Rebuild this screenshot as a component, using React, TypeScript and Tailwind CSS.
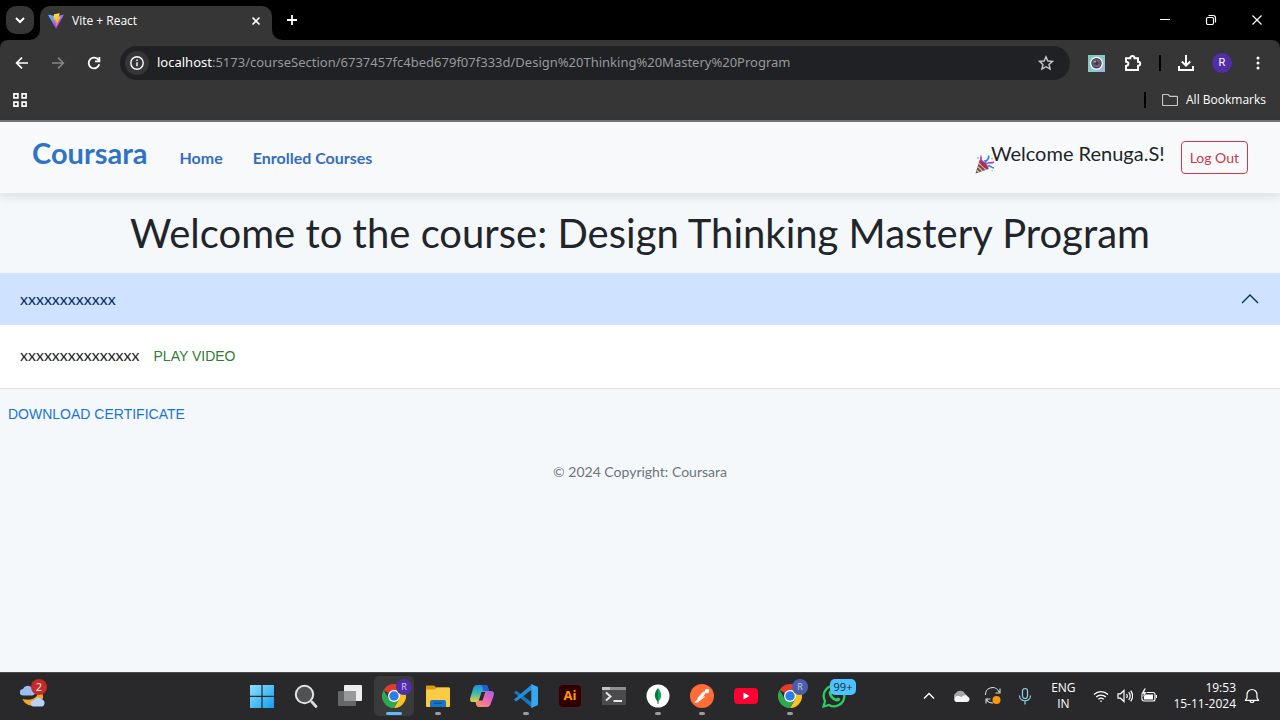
import type { ReactNode } from "react";

const UI = "font-['Open_Sans','Noto_Sans',sans-serif]";

function ViteLogo() {
  return (
    <svg viewBox="0 0 410 404" className="size-4" aria-hidden="true">
      <defs>
        <linearGradient id="va" x1="6" y1="33" x2="235" y2="344" gradientUnits="userSpaceOnUse">
          <stop stopColor="#41D1FF" />
          <stop offset="1" stopColor="#BD34FE" />
        </linearGradient>
        <linearGradient id="vb" x1="194" y1="9" x2="236" y2="293" gradientUnits="userSpaceOnUse">
          <stop stopColor="#FFEA83" />
          <stop offset=".08" stopColor="#FFDD35" />
          <stop offset="1" stopColor="#FFA800" />
        </linearGradient>
      </defs>
      <path fill="url(#va)" d="M399.6 59.5 215.6 388.5c-3.8 6.8-13.5 6.8-17.4.1L10.6 59.5c-4.2-7.4 2.1-16.3 10.4-14.8l184.2 32.9c1.2.2 2.4.2 3.5 0l180.3-32.8c8.3-1.5 14.7 7.4 10.6 14.7Z" />
      <path fill="url(#vb)" d="M293 1.6 156.8 28.3a5 5 0 0 0-4 4.6l-8.4 141.4a5 5 0 0 0 6.1 5.2l37.9-8.8c3.6-.8 6.7 2.3 6 5.9l-11.3 55.2c-.8 3.7 2.7 6.9 6.3 5.8l23.4-7.1c3.6-1.1 7.2 2.1 6.3 5.8l-17.9 86.6c-1.1 5.4 6.1 8.4 9.1 3.7l2-3.1L323.4 102.2c1.9-3.7-1.3-7.9-5.4-7.1l-39 7.5c-3.7.7-6.8-2.7-5.8-6.3l25.5-88.4c1-3.6-2.1-7.1-5.7-6.3Z" />
    </svg>
  );
}

function Line({ d, size = "size-4", w = 1.6, vb = "0 0 16 16", cls = "" }: { d: string; size?: string; w?: number; vb?: string; cls?: string }) {
  return (
    <svg viewBox={vb} className={`${size} ${cls}`} fill="none" stroke="currentColor" strokeWidth={w} aria-hidden="true">
      <path d={d} />
    </svg>
  );
}

function TitleBar() {
  return (
    <div className="flex h-10 bg-black text-white">
      <div className="w-10 shrink-0 pl-[6px] pt-[6px]">
        <button aria-label="Search tabs" className="grid size-7 place-items-center rounded-[10px] bg-[#363636]">
          <Line d="M4 6l4 4 4-4" size="size-4" w={2} />
        </button>
      </div>
      <div className="relative mt-[6px] flex w-[232px] items-center rounded-t-[10px] bg-[#363636] pb-1 pl-2 pr-2">
        <svg viewBox="0 0 10 10" className="absolute -left-[10px] bottom-0 size-[10px] fill-[#363636]"><path d="M10 0v10H0A10 10 0 0 0 10 0" /></svg>
        <svg viewBox="0 0 10 10" className="absolute -right-[10px] bottom-0 size-[10px] fill-[#363636]"><path d="M0 0v10h10A10 10 0 0 1 0 0" /></svg>
        <ViteLogo />
        <span className={`${UI} ml-2 flex-1 text-[12px]`}>Vite + React</span>
        <button aria-label="Close tab" className="grid size-4 place-items-center"><Line d="M4.5 4.5l7 7M11.5 4.5l-7 7" /></button>
      </div>
      <button aria-label="New tab" className="ml-3 grid w-4 place-items-center"><Line d="M8 3v10M3 8h10" w={1.8} /></button>
      <div className="ml-auto flex">
        <button aria-label="Minimize" className="grid w-[46px] place-items-center"><Line d="M3 7.5h10" w={1} /></button>
        <button aria-label="Restore" className="grid w-[46px] place-items-center">
          <Line d="M5 5.5h4a1.5 1.5 0 0 1 1.5 1.5v4a1.5 1.5 0 0 1-1.5 1.5H5A1.5 1.5 0 0 1 3.5 11V7A1.5 1.5 0 0 1 5 5.5M5.5 3.5H10A2.5 2.5 0 0 1 12.5 6v4.5" w={1.2} />
        </button>
        <button aria-label="Close" className="grid w-[46px] place-items-center"><Line d="M3.5 3.5l9 9M12.5 3.5l-9 9" w={1.2} /></button>
      </div>
    </div>
  );
}

function CameraIcon() {
  return (
    <svg viewBox="0 0 17 17" className="size-[17px]" aria-hidden="true">
      <defs>
        <linearGradient id="cam" x1="0" y1="0" x2="1" y2="1"><stop stopColor="#7fc9b4" /><stop offset=".6" stopColor="#8ccac9" /><stop offset="1" stopColor="#a6a8ee" /></linearGradient>
      </defs>
      <path fill="url(#cam)" d="M0 0h17v17H0z" />
      <circle cx="8.5" cy="8.3" r="6.5" fill="#fff" />
      <circle cx="8.5" cy="8.3" r="4.6" fill="#6a6078" stroke="#453b55" strokeWidth="1.2" />
      <circle cx="8.5" cy="8.3" r="2" fill="#403750" />
      <circle cx="7" cy="6.8" r=".8" fill="#d5cfe2" />
    </svg>
  );
}

function Toolbar() {
  return (
    <div className="bg-black">
      <div className="rounded-t-[8px] border-b-2 border-[#77777a] bg-[#363636] text-white">
        <div className="flex h-[46px] items-center pl-[14px] pr-[14px]">
          <button aria-label="Back"><Line d="M14 8H3M8 2.6L2.6 8 8 13.4" w={1.7} /></button>
          <button aria-label="Forward" className="ml-5 text-[#878787]"><Line d="M2 8h11M8 2.6L13.4 8 8 13.4" w={1.5} /></button>
          <button aria-label="Reload" className="ml-5"><Line d="M13.3 9.3A5.4 5.4 0 1 1 12.6 5M13.4 2v4.3H9" w={1.8} /></button>
          <div className="ml-[18px] flex h-[34px] flex-1 items-center rounded-full bg-[#202124] pl-[5px] pr-4">
            <button aria-label="Site information" className="grid size-6 place-items-center rounded-full bg-[#363636]">
              <Line d="M8 1.8a6.2 6.2 0 1 0 0 12.4A6.2 6.2 0 1 0 8 1.8M8 7.2v4M8 4.5v1.5" w={1.4} />
            </button>
            <p className="ml-2 flex-1 whitespace-nowrap font-['Noto_Sans','Open_Sans',sans-serif] text-[13px] text-[#97999c]">
              <span className="text-white">localhost</span>:5173/courseSection/6737457fc4bed679f07f333d/Design%20Thinking%20Mastery%20Program
            </p>
            <button aria-label="Bookmark this tab" className="text-[#c9c9c9]">
              <Line d="M8 1.7l1.9 4.3 4.7.4-3.6 3.1 1.1 4.6L8 11.7l-4.1 2.4L5 9.5 1.4 6.4 6.1 6z" w={1.4} />
            </button>
          </div>
          <div className="ml-[18px] flex items-center">
            <CameraIcon />
            <button aria-label="Extensions" className="ml-[19px]">
              <Line vb="0 0 18 18" size="size-[18px]" w={1.9} d="M2 4.2h4.300c0-3 4.200-3 4.200 0H14v3.600c3 0 3 3.800 0 3.800v4.400H2v-4.100c3.200-.4 3.200-4 0-4.200z" />
            </button>
            <span className="ml-[17px] h-4 w-[2px] bg-black" />
            <button aria-label="Downloads" className="ml-4">
              <Line vb="0 0 18 18" size="size-[18px]" w={2} d="M9 1v10.5M4.8 7.5L9 11.6l4.2-4.1M2 12v4h14v-4" />
            </button>
            <button aria-label="Profile" className="ml-[17px] grid size-5 place-items-center rounded-full bg-[#512da8] font-['Roboto',sans-serif] text-[11px]">R</button>
            <button aria-label="Menu" className="ml-[18px]">
              <svg viewBox="0 0 16 16" className="size-4 fill-white"><circle cx="8" cy="3" r="1.5" /><circle cx="8" cy="8" r="1.5" /><circle cx="8" cy="13" r="1.5" /></svg>
            </button>
          </div>
        </div>
        <div className="flex h-[34px] items-center pb-2 pl-3 pr-[14px] pt-[2px]">
          <button aria-label="Apps"><Line d="M1.9 1.9h4v4h-4zM10.1 1.9h4v4h-4zM1.9 10.1h4v4h-4zM10.1 10.1h4v4h-4z" w={1.6} /></button>
          <span className="ml-auto h-4 w-[2px] bg-black" />
          <button className={`${UI} ml-4 flex items-center gap-2 text-[12px] leading-4`}>
            <Line d="M1.5 2.5h4.7l1.7 1.8h6.600a1 1 0 0 1 1 1v7.200a1 1 0 0 1-1 1h-13a1 1 0 0 1-1-1v-9a1 1 0 0 1 1-1z" w={1.2} cls="text-[#c7c7c7]" />
            All Bookmarks
          </button>
        </div>
      </div>
    </div>
  );
}

function PartyPopper() {
  return (
    <svg viewBox="0 0 20 20" className="size-5" aria-hidden="true" fill="none">
      <path d="M4.500 6.500l9 8.500L.5 19.500z" fill="#6b4d4a" />
      <path d="M3.800 9l7.500 7M2.500 12.500l5 4.500M1.500 16l3 2.500" stroke="#dfbfa8" strokeWidth="1.300" />
      <path d="M4.500 6c3-.5 8.500 4.500 9.200 9C10 15.500 4 10 4.500 6z" fill="#bf2456" />
      <path d="M8 8C5.500 6.500 5.500 4 6.500 2.500" stroke="#c32daa" strokeWidth="1.600" />
      <path d="M10 9c1-4 5-3 3.500-7.500M10 6c0 2 1 3 1 4" stroke="#1993dc" strokeWidth="1.700" />
      <path d="M12 10c2-3 3 .5 7-2" stroke="#d033bd" strokeWidth="1.600" />
      <path d="M12.500 13c2-3 3 .5 6.500 1" stroke="#1993dc" strokeWidth="1.600" />
      <g fill="#f0b32e"><circle cx="6" cy="1.500" r=".8" /><circle cx="17" cy="4.500" r="1" /><circle cx="17" cy="16.500" r=".7" /></g>
      <circle cx="3" cy="4" r=".7" fill="#1993dc" />
    </svg>
  );
}

function SiteNav() {
  return (
    <nav className="flex h-[71px] items-center bg-[#f8f9fa] px-8 shadow-[0_4px_10px_rgba(0,0,0,0.1)]">
      <a href="#" className="pb-[10px] text-[29px] leading-8 font-bold text-[#2f73c4]">Coursara</a>
      <a href="#" className="ml-8 text-[16px] font-bold text-[#356dbd]">Home</a>
      <a href="#" className="ml-[30px] text-[16px] font-bold text-[#356dbd]">Enrolled Courses</a>
      <div className="ml-auto flex items-center">
        <div className="-mr-1 pt-3"><PartyPopper /></div>
        <span className="pb-[10px] text-[20px] leading-6 text-[#212529]">Welcome Renuga.S!</span>
        <button className="ml-4 h-[33px] rounded-[4px] border border-[#dc3545] px-2 text-[14px] text-[#c83a4a]">Log Out</button>
      </div>
    </nav>
  );
}

function ChromeLogo() {
  return (
    <svg viewBox="0 0 48 48" className="size-6" aria-hidden="true">
      <path fill="#e33b2e" d="M24 24L3.2 12a24 24 0 0 1 41.6 0z" />
      <path fill="#fcc31e" d="M24 24V12h20.8A24 24 0 0 1 24 48L34.4 30z" />
      <path fill="#2da94f" d="M3.2 12L13.6 30 24 24l10.4 6L24 48A24 24 0 0 1 3.2 12z" />
      <circle cx="24" cy="24" r="12" fill="#fff" />
      <circle cx="24" cy="24" r="9.5" fill="#2b7de9" />
    </svg>
  );
}

function Task({ label, active, open, badge, children }: { label: string; active?: boolean; open?: boolean; badge?: ReactNode; children: ReactNode }) {
  return (
    <button aria-label={label} className="flex w-11 justify-center">
      <span className={`relative grid h-10 w-10 place-items-center rounded-[5px] ${active ? "bg-[#3a3a3b]" : ""}`}>
        {children}
        {badge}
        {active && <span className="absolute bottom-[1px] h-[3px] w-4 rounded-full bg-[#5bbcf3]" />}
        {open && <span className="absolute bottom-[1px] h-[3px] w-[6px] rounded-full bg-[#9b9b9d]" />}
      </span>
    </button>
  );
}

function Taskbar() {
  return (
    <footer className={`${UI} flex h-12 items-center bg-[#29292b] text-white shadow-[inset_0_1px_0_#48484b]`}>
      <div className="w-60 shrink-0 pl-5">
        <button aria-label="Weather, 2 alerts" className="relative block size-7">
          <svg viewBox="0 0 28 28" className="size-7" aria-hidden="true">
            <path fill="#f7a427" d="M17 6c4 7-3 14-14.500 11C6 26 20 26 23 16c.5-4-2-8-6-10z" />
            <path fill="#9bbdf0" d="M3 13.500a3 3 0 0 1 0-6.500 5 5 0 0 1 8-2 4 4 0 0 1 1 8.500z" />
            <path fill="#b6d2fb" d="M13.500 24.500a3 3 0 0 1 .5-6 4.200 4.200 0 0 1 7.500-1 3.600 3.600 0 0 1 .5 7z" />
          </svg>
          <span className="absolute -top-[3px] left-[11px] grid size-4 place-items-center rounded-full bg-[#c62a24] text-[11px]">2</span>
        </button>
      </div>
      <div className="flex">
        <Task label="Start">
          <svg viewBox="0 0 24 24" className="size-6"><defs><linearGradient id="win" x1="0" y1="0" x2="1" y2="1"><stop stopColor="#8be2fb" /><stop offset="1" stopColor="#149df0" /></linearGradient></defs><path fill="url(#win)" d="M0 1h11.4v10.800H0zM12.600 1H24v10.800H12.600zM0 13h11.400v11H0zM12.600 13H24v11H12.600z" /></svg>
        </Task>
        <Task label="Search">
          <svg viewBox="0 0 24 24" className="size-6" fill="none"><path d="M18 18l4 4.500" stroke="#d9dadc" strokeWidth="2.800" strokeLinecap="round" /><circle cx="10.500" cy="10.500" r="8.700" fill="#515254" stroke="#e1e3e5" strokeWidth="2" /></svg>
        </Task>
        <Task label="Task view">
          <svg viewBox="0 0 24 24" className="size-6"><rect x="6" y="1" width="18" height="16" rx="1" fill="#ededee" /><rect y="7" width="18" height="15" rx="1" fill="#656668" /><path fill="#98999b" d="M6 7h12v10H6z" /></svg>
        </Task>
        <Task label="Chrome" active badge={<span className="absolute right-[2px] top-[3px] grid size-4 place-items-center rounded-full bg-[#512da8] text-[9px] text-[#d7cef0]">R</span>}><ChromeLogo /></Task>
        <Task label="File Explorer" open>
          <svg viewBox="0 0 24 24" className="size-6"><path fill="#d79a16" d="M0 2.500a1 1 0 0 1 1-1h7l2.500 2H23v6H0z" /><path fill="#fccb45" d="M0 5.500h8.500l2.500-2h12a1 1 0 0 1 1 1V22a1 1 0 0 1-1 1H1a1 1 0 0 1-1-1z" /><path fill="#1675c4" d="M4 23v-5a2 2 0 0 1 2-2h12a2 2 0 0 1 2 2v5z" /><path fill="#0a4f93" d="M8 18.500h8v1.300H8z" /></svg>
        </Task>
        <Task label="Copilot">
          <svg viewBox="0 0 24 24" className="size-6">
            <defs>
              <linearGradient id="cpa" x1="0" y1="0" x2="0" y2="1"><stop stopColor="#1e8fe8" /><stop offset=".45" stopColor="#35b8b2" /><stop offset="1" stopColor="#f0cb3c" /></linearGradient>
              <linearGradient id="cpb" x1="1" y1="0" x2="0" y2="1"><stop stopColor="#a45cec" /><stop offset=".5" stopColor="#ed6bb0" /><stop offset="1" stopColor="#fc9a54" /></linearGradient>
            </defs>
            <path fill="url(#cpa)" d="M7 1h8a3 3 0 0 1 3 3l1 3h-4c-2 0-2.500 1-3 3l-1.500 5c-.5 2-1.500 3-3.500 3H3c-3 0-3.500-2-2.500-5L3 5c.7-2.500 2-4 4-4z" />
            <path fill="#1663d4" d="M12 1h3c2 0 2.500 1 3 3l1 3h-4c-2 0-2-1-2.500-3z" />
            <path fill="url(#cpb)" d="M17 23H9c-2 0-2.500-1-3-3l-.5-2c2 0 3.200-1 3.800-3l1.700-5c.6-2 1.500-3 3.500-3H21c3 0 3.500 2 2.500 5L21 19c-.7 2.500-2 4-4 4z" />
            <path fill="#29292b" d="M11.500 8h3.800l-2.800 8.500H8.800z" />
          </svg>
        </Task>
        <Task label="Visual Studio Code" open>
          <svg viewBox="0 0 24 24" className="size-6"><path fill="#1478bd" d="M0 8.500L2 6.500l16 12v5.200z" /><path fill="#1f8fdb" d="M0 15.500l2 2 16-12V.3z" /><path fill="#35a8f2" d="M17.300 0L24 3v18l-6.700 3z" /></svg>
        </Task>
        <Task label="Illustrator"><span className="grid size-[22px] place-items-center rounded-[4px] bg-[#330000] text-[13px] font-bold text-[#ff9a00]">Ai</span></Task>
        <Task label="Terminal">
          <svg viewBox="0 0 24 24" className="size-6"><path fill="#4b4b4d" d="M0 3h24v18H0z" /><path fill="#8e8f91" d="M0 3h24v3H0z" /><path fill="#c2c3c5" d="M0 3h8v3H0z" /><path d="M4 8.500l4.500 4L4 16.500M11.500 17H20" stroke="#e7e7e7" strokeWidth="2" fill="none" /></svg>
        </Task>
        <Task label="MongoDB Compass" open>
          <svg viewBox="0 0 24 24" className="size-6"><circle cx="12" cy="12" r="11.500" fill="#fff" /><path fill="#11a45b" d="M12 4c4 4.500 4.500 9.500 0 14z" /><path fill="#0a7449" d="M12 4c-4 4.500-4.500 9.500 0 14z" /><path stroke="#3c5a4d" d="M12 17v3" /></svg>
        </Task>
        <Task label="Postman" open>
          <svg viewBox="0 0 24 24" className="size-6"><circle cx="12" cy="12" r="12" fill="#ff6c37" /><path d="M9 14.500l5-5.500" stroke="#fff" strokeWidth="3" strokeLinecap="round" /><path d="M5 18.500l5-4.500M6.500 18.500l8-6" stroke="#fff" strokeWidth="1.200" /><circle cx="17" cy="7" r="2.300" fill="#fff" /></svg>
        </Task>
        <Task label="YouTube"><svg viewBox="0 0 24 24" className="size-6"><rect y="4" width="24" height="16" rx="4" fill="#ff0033" /><path fill="#fff" d="M9.500 8.500v7l6-3.500z" /></svg></Task>
        <Task label="Chrome, second window" open badge={<span className="absolute right-[2px] top-[3px] grid size-4 place-items-center rounded-full bg-[#4a5eac] text-[9px] text-[#c6cde8]">R</span>}><ChromeLogo /></Task>
        <Task label="WhatsApp" badge={<span className="absolute left-[16px] top-[3px] grid h-4 w-[26px] place-items-center rounded-[5px] bg-[#4cc2ff] text-[11px] leading-4 text-[#142b38]">99+</span>}>
          <svg viewBox="0 0 24 24" className="size-6"><path fill="none" stroke="#29cf60" strokeWidth="2.200" d="M1.500 22.500L3 17A10.300 10.300 0 1 1 7 21z" /><path fill="#29cf60" d="M8 6.500c.8-.6 1.400-.3 1.700.4l.8 1.900c.2.600-.8 1.300-.8 1.800 1 2 2.500 3.200 4.300 3.900.6 0 1.200-1.300 1.800-1.100l2.200 1.100c.7.5-.2 2.300-1.500 2.800-3.500 1.200-9.300-3.500-9.800-7.800-.1-1.200.5-2.300 1.300-3z" /></svg>
        </Task>
      </div>
      <div className="ml-auto flex items-center pr-5">
        <button aria-label="Show hidden icons"><Line d="M3 10.5l5-5 5 5" w={1.4} /></button>
        <svg viewBox="0 0 18 16" className="ml-[15px] h-4 w-[18px]" aria-label="OneDrive"><path fill="#a6a7a9" d="M2.500 10a3.500 3.500 0 0 1 1.500-5 5 5 0 0 1 8.500 0L16 9z" /><path fill="#f5f5f5" d="M4 14a3 3 0 0 1 0-5.500c2-1 4 0 5.500.5 2-2 5-2.500 6-.5 3 1 2.500 5.500-1 5.500z" /></svg>
        <svg viewBox="0 0 18 18" className="ml-[14px] size-[18px]" fill="none" stroke="#d9d9d9" strokeWidth="1.100" aria-label="Update available"><path d="M1.500 8A7 7 0 0 1 15 5M16 1.500V6h-4.500M2 16.500V12h4.500M2.500 12.500A7 7 0 0 0 9 16" /><circle cx="12.500" cy="13" r="4" fill="#fa9a0b" stroke="none" /></svg>
        <svg viewBox="0 0 16 18" className="ml-[15px] h-[18px] w-4" fill="none" stroke="#8bd5e6" strokeWidth="1.200" aria-label="Microphone"><rect x="5.500" y="1.500" width="5" height="10" rx="2.500" /><path d="M2.500 8.500c0 7 11 7 11 0M8 14v3.500" /></svg>
        <button className="ml-4 w-[28px] text-center text-[12px] leading-4">ENG<br />IN</button>
        <button aria-label="Network, volume and battery" className="ml-4 flex items-center gap-2">
          <Line d="M1 6.500a10 10 0 0 1 14 0M3.200 9a7 7 0 0 1 9.600 0M5.400 11.300a3.900 3.900 0 0 1 5.200 0M8 12.500v1.500" w={1.3} />
          <Line d="M1 5.800h2.500L7 2.500v11l-3.500-3.300H1zM9.500 6c1 1.300 1 2.700 0 4M11.700 4.200c2 2.500 2 5.100 0 7.600M13.700 2.700c2.500 3.400 2.500 7.200 0 10.600" w={1.2} />
          <svg viewBox="0 0 16 16" className="size-4" fill="none" stroke="#fff"><rect x="1" y="4.500" width="13" height="8.500" rx="2" strokeWidth="1.200" /><path d="M3 6.500h9v5H3zM15 7h1v3h-1z" fill="#fff" stroke="none" /><path d="M3.500 0L0 6h2.500L1.500 10 6 4H3.500L5 0z" fill="#fff" stroke="#29292b" strokeWidth=".5" /></svg>
        </button>
        <button className="ml-4 text-right text-[12px] leading-4">19:53<br />15-11-2024</button>
        <button aria-label="Notifications" className="ml-2"><Line d="M1.500 12.300h13L13 9.500V6.500a5 5 0 0 0-10 0v3zM6 13c.5 2 3.500 2 4 0" w={1.2} /></button>
      </div>
    </footer>
  );
}

export default function App() {
  return (
    <div className="flex min-h-screen flex-col bg-[#f4f8fb]">
      <header>
        <TitleBar />
        <Toolbar />
      </header>
      <div className="flex-1 font-['Lato',sans-serif]">
        <SiteNav />
        <main>
          <h1 className="px-4 pb-4 pt-4 text-center text-[40px] leading-[48px] text-[#212529]">
            Welcome to the course: Design Thinking Mastery Program
          </h1>
          <section className="border-b border-[#dee2e6] bg-white">
            <button aria-expanded="true" aria-controls="lesson" className="flex h-[52px] w-full items-center justify-between bg-[#cfe2ff] px-5 text-[16px] text-[#052c65]">
              <span>xxxxxxxxxxxx</span>
              <Line d="M2 12L10 4l8 8" vb="0 0 20 16" size="h-4 w-5" w={1.4} />
            </button>
            <div id="lesson" className="flex h-[63px] items-center gap-[14px] px-5 text-[16px] text-[#212529]">
              <span className="pb-1">xxxxxxxxxxxxxxx</span>
              <button className="font-['Liberation_Sans',sans-serif] text-[14px] text-[#2e7d32]">PLAY VIDEO</button>
            </div>
          </section>
          <button className="ml-2 mt-[13px] h-6 font-['Liberation_Sans',sans-serif] text-[14px] text-[#1976d2]">DOWNLOAD CERTIFICATE</button>
        </main>
        <p className="mt-[34px] text-center text-[14px] leading-6 text-[#6c757d]">© 2024 Copyright: Coursara</p>
      </div>
      <Taskbar />
    </div>
  );
}
